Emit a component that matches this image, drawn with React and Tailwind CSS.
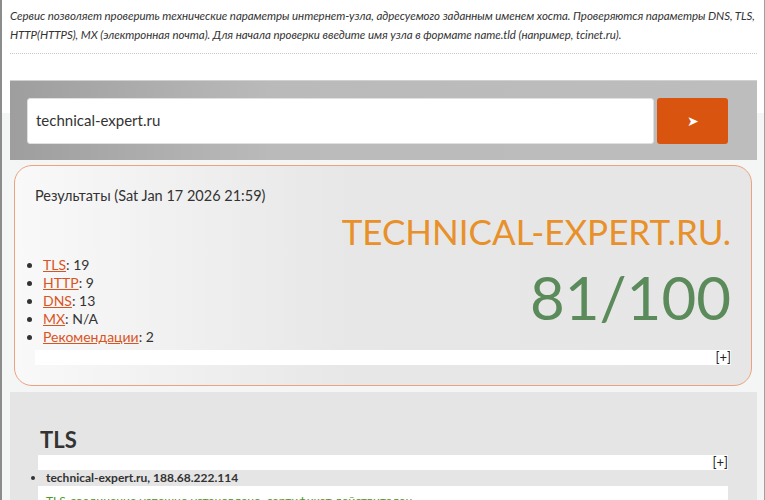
import React from 'react';

const SCORES = [
  { label: 'TLS', value: '19' },
  { label: 'HTTP', value: '9' },
  { label: 'DNS', value: '13' },
  { label: 'MX', value: 'N/A' },
  { label: 'Рекомендации', value: '2' },
];

function Toggle() {
  return (
    <div className="flex h-[15px] items-center justify-end bg-white text-[13px] leading-none text-[#222]">
      [+]
    </div>
  );
}

export default function App() {
  return (
    <div
      className="min-h-[500px] w-[765px] overflow-hidden border-l-2 border-r border-l-[#8c8c8c] border-r-[#a0a0a0] bg-[linear-gradient(to_bottom,#ffffff_113px,#f4f5f5_113px)] pl-[8px] pr-[7px] text-[#333]"
      style={{ fontFamily: 'Lato, "Noto Sans", sans-serif' }}
    >
      {/* Description */}
      <div className="pt-[6px]">
        <p className="whitespace-nowrap text-[11.5px] italic leading-[19px] tracking-[-0.05px] text-[#333]">
          Сервис позволяет проверить технические параметры интернет-узла, адресуемого заданным именем хоста. Проверяются параметры DNS, TLS,
          <br />
          HTTP(HTTPS), MX (электронная почта). Для начала проверки введите имя узла в формате name.tld (например, tcinet.ru).
        </p>
        <div className="mt-[9px] border-t border-dotted border-[#c8c8c8]" />
      </div>

      {/* Search bar */}
      <div className="mt-[26px] flex h-[80px] items-center gap-[3px] border-t border-[#d0d0d0] bg-[linear-gradient(to_right,#9e9e9e,#bababa_35%,#bdbdbd)] pl-[17px] pr-[29px]">
        <div className="flex h-[46px] flex-1 items-center rounded-[3px] border border-[#e0e0e0] bg-white pl-[8px] text-[15px] text-[#333]">
          technical-expert.ru
        </div>
        <button className="flex h-[46px] w-[71px] items-center justify-center rounded-[3px] bg-[#d9540f] text-[14px] text-white">
          ➤
        </button>
      </div>

      {/* Results */}
      <div className="ml-[4px] mr-[5px] mt-[5px] rounded-[18px] border border-[#eca27c] bg-[linear-gradient(to_right,#f9f9f9,#e7e7e7_45%,#e6e6e6)] px-[20px] pb-[20px] pt-[20px]">
        <div className="text-[14.5px] leading-[20px] text-[#333]">Результаты (Sat Jan 17 2026 21:59)</div>
        <div className="mt-[3px] text-right text-[35px] leading-[44px] text-[#e8912a]">TECHNICAL-EXPERT.RU.</div>
        <div className="flex items-start justify-between">
          <ul className="-ml-[6px] mt-[3px] list-disc pl-[14px] text-[14px] leading-[18px] text-[#333]">
            {SCORES.map((s) => (
              <li key={s.label}>
                <a className="text-[#d9541e] underline">{s.label}</a>: {s.value}
              </li>
            ))}
          </ul>
          <div className="mt-[9px] text-[60px] leading-[70px] text-[#5b8b5b]">81/100</div>
        </div>
        <div className="mt-[4px]">
          <Toggle />
        </div>
      </div>

      {/* TLS section */}
      <div className="mt-[6px] bg-[#e5e5e5] pl-[28px] pr-[29px] pt-[34px]">
        <h2 className="pl-[2px] text-[22px] font-bold leading-[28px] text-[#333]">TLS</h2>
        <div className="mt-[1px]">
          <Toggle />
        </div>
        <ul className="list-disc pl-[8px] text-[12px] font-bold leading-[16px] text-[#333]">
          <li>technical-expert.ru, 188.68.222.114</li>
        </ul>
        <div className="h-[30px] bg-white px-[8px] pt-[6px] text-[12px] text-[#4a9a2a]">
          TLS-соединение успешно установлено, сертификат действителен
        </div>
      </div>
    </div>
  );
}
